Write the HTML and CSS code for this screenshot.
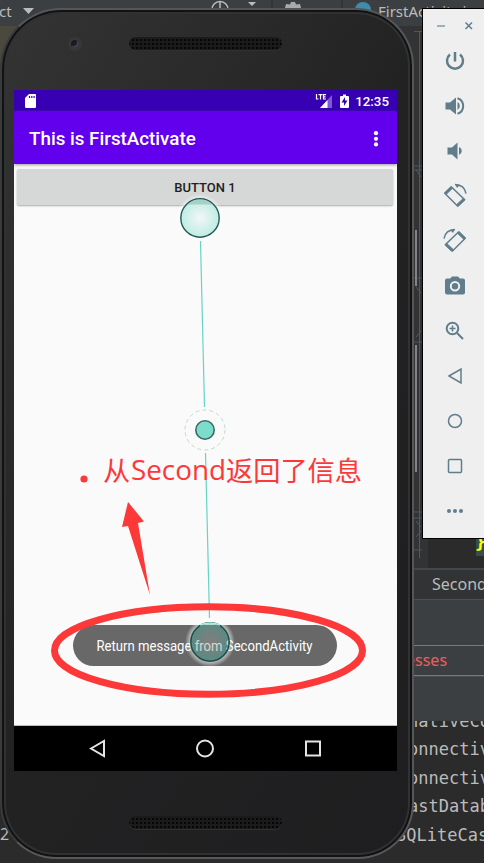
FILE: index.html
```
<!DOCTYPE html>
<html lang="en">
<head>
<meta charset="utf-8">
<title>Emulator</title>
<link rel="stylesheet" href="styles.css">
</head>
<body>
<main class="desktop">
  <section class="ide">
    <header class="ide-top">
      <span class="project">ct</span>
      <svg class="ide-icons" width="360" height="26" viewBox="0 0 360 26"><path d="M11 8h11l-5.500 6zM236 2h8l-4 4z" fill="#bbb"/><circle cx="208" cy="9.500" r="8" fill="none" stroke="#bbb" stroke-width="1.500"/><path d="M208 2v8" stroke="#bbb" stroke-width="1.500"/><path d="M273 8l1-4 4 .5 1-2.500h4l1 2.500 4-.5 1 4z" fill="#aaa"/><circle cx="351" cy="10" r="8" fill="#3f8dac"/><path d="M260 0v26M330 0v26" stroke="#292c2e"/></svg>
      <span class="filename">FirstActivity.java</span>
    </header>
    <div class="editor"><span class="brace">}</span></div>
    <div class="crumbs">Second</div>
    <div class="panel"></div>
    <div class="process">esses</div>
    <div class="panel-lower"></div>
    <div class="console">
      <p class="clipped">nativeCon</p><p>onnectivi</p><p>onnectivi</p><p>astDataba</p><p class="last">SQLiteCas</p>
    </div>
    <span class="left-number">2</span>
    <svg class="gutter" width="16" height="530" viewBox="0 0 16 530"><path d="M5.500 4v526M0 3.500h8M0 138h8M0 142h8M2 142l5 7M0 250h8M2 259l5 6M0 314h8M2 309l5-6M0 484h8M0 490h8M2 493l5 6M2 509l5-6M0 522h8" fill="none" stroke="#55585b"/><path d="M2 202v56M2 317v127" stroke="#818386" stroke-width="2"/></svg>
  </section>

  <section class="phone">
    <div class="phone-top"><i class="camera"></i><i class="speaker"></i></div>
    <div class="screen">
      <div class="statusbar">
        <svg width="12" height="14" viewBox="0 0 12 14"><path fill="#fff" d="M4 0h6.500q.5 0 .5 1.500v11q0 1.500-1 1.500h-9Q0 14 0 12.500V4z"/><path d="M4.500 2v2M6.800 2v2M9.100 2v2" stroke="#3700b3" stroke-width="1.200"/></svg>
        <span class="status-right">
          <svg width="34" height="15" viewBox="0 0 34 15"><path d="M5 14L17 1v13z" fill="#7e59cf"/><path d="M5 14l7.500-8v8z" fill="#fff"/><path d="M1.500 0v5h2M3.500.7h4M5.500.7V5.500M11 .7H8.500V5H11M8.500 2.800h2" fill="none" stroke="#fff" stroke-width="1.200"/><path d="M26 2h2V.5h3V2h2q1 0 1 1v10q0 1-1 1h-7q-1 0-1-1V3q0-1 1-1z" fill="#fff"/><path d="M30 3l-3.500 5.500H29V12l3.500-5.500H30z" fill="#3700b3"/></svg>
          <b>12:35</b>
        </span>
      </div>
      <div class="appbar"><h1>This is FirstActivate</h1><svg width="6" height="18" viewBox="0 0 6 18"><g fill="#fff"><circle cx="3" cy="3.200" r="2.100"/><circle cx="3" cy="8.800" r="2.100"/><circle cx="3" cy="14.400" r="2.100"/></g></svg></div>
      <div class="content"><button><span>BUTTON 1</span></button><div class="toast"><span>Return message from SecondActivity</span></div></div>
      <nav><svg width="383" height="45" viewBox="0 0 383 45"><g fill="none" stroke="#e4e4e4" stroke-width="2"><path d="M77 22.500L90 15v15z"/><circle cx="191" cy="22.500" r="8"/><path d="M292 15.500h14v14h-14z"/></g></svg></nav>
    </div>
    <div class="phone-bottom"><i class="speaker"></i></div>
  </section>

  <aside class="toolbar">
    <div class="window-controls"><svg width="61" height="20" viewBox="0 0 61 20"><path d="M14 11h8" stroke="#9db0b8" stroke-width="2"/><path d="M42.500 7.500l6.500 6.500M49 7.500L42.500 14" stroke="#607d8b" stroke-width="1.500"/></svg></div>
    <svg viewBox="0 0 24 24"><path class="line heavy" d="M12 3v9.500M7 5.400a8 8 0 1 0 10 0"/></svg>
    <svg viewBox="0 0 24 24"><path class="solid" d="M2.500 8.500v7h4.500l6 5V3.500l-6 5zM14.500 8v8q2.300-1.200 2.300-4t-2.300-4z"/><path class="line" d="M14.500 4.200a8.200 8.200 0 0 1 0 15.600"/></svg>
    <svg viewBox="0 0 24 24"><path class="solid" d="M4.500 8.500v7H9l5.500 5V3.500L9 8.500zM16 8v8q2.800-1.200 2.800-4T16 8z"/></svg>
    <svg class="rotate" viewBox="0 0 24 24"><path class="line thin" d="M8.500 3L21.500 15.500l-7 6.500L2 9.500zM12 .6q9.500.4 11 9"/><path class="line rim" d="M2 9.800L8.800 3.300M21.200 15.200L14.300 21.700"/><path class="solid" d="M12 0l5 1-3 3z"/></svg>
    <svg class="rotate flip" viewBox="0 0 24 24"><path class="line thin" d="M8.500 3L21.500 15.500l-7 6.500L2 9.500zM12 .6q9.500.4 11 9"/><path class="line rim" d="M2 9.800L8.800 3.300M21.200 15.200L14.300 21.700"/><path class="solid" d="M12 0l5 1-3 3z"/></svg>
    <svg viewBox="0 0 24 24"><path class="solid" d="M9 2.500L7.200 4.500H4q-2 0-2 2v12q0 2 2 2h16q2 0 2-2v-12q0-2-2-2h-3.200L15 2.500z"/><circle cx="12" cy="12.300" r="4.200" fill="#607d8b" stroke="#efefef" stroke-width="2"/></svg>
    <svg viewBox="0 0 24 24"><circle class="line" cx="9.500" cy="9.500" r="5.800"/><path class="line" d="M14 14l6 6"/><path class="line thin" d="M6.500 9.500h6M9.500 6.500v6"/></svg>
    <svg viewBox="0 0 24 24"><path class="line thin" d="M6 12l12-7v14z"/></svg>
    <svg viewBox="0 0 24 24"><circle class="line thin" cx="12" cy="12" r="6.500"/></svg>
    <svg viewBox="0 0 24 24"><rect class="line thin" x="5.500" y="5.500" width="13" height="13" rx="1"/></svg>
    <svg viewBox="0 0 24 24"><g class="solid"><circle cx="6" cy="12" r="2"/><circle cx="12" cy="12" r="2"/><circle cx="18" cy="12" r="2"/></g></svg>
  </aside>

  <svg class="overlay" width="484" height="863" viewBox="0 0 484 863">
    <defs>
      <radialGradient id="start"><stop stop-color="#f2f7f6"/><stop offset="1" stop-color="#beece4"/></radialGradient>
      <radialGradient id="halo"><stop offset=".76" stop-color="#fff" stop-opacity="0"/><stop offset=".78" stop-color="#fff" stop-opacity=".6"/><stop offset="1" stop-color="#fff" stop-opacity="0"/></radialGradient>
      <radialGradient id="finish"><stop stop-color="#a89a96"/><stop offset="1" stop-color="#4bb8a8"/></radialGradient>
    </defs>
    <path d="M200.500 241L204.500 407M205.500 453L209.500 618" stroke="#65d4c3" stroke-width="1.200"/>
    <circle cx="200" cy="218" r="24" fill="url(#halo)"/>
    <circle cx="200" cy="218" r="19.200" fill="url(#start)" stroke="#245b57" stroke-width="1.400"/>
    <path d="M187.500 204.500a18.300 18.300 0 0 1 25 0z" fill="#a5cfc7"/>
    <circle cx="205" cy="430" r="20" fill="none" stroke="#bddbd4" stroke-dasharray="4 3"/>
    <circle cx="205" cy="430" r="9.200" fill="#7edccd" stroke="#3b6b65" stroke-width="1.600"/>
    <ellipse cx="208.500" cy="650.500" rx="154" ry="43.700" fill="none" stroke="#fd3838" stroke-width="7"/>
    <circle cx="210" cy="642" r="25" fill="url(#halo)"/>
    <circle cx="210" cy="642" r="19.200" fill="url(#finish)" fill-opacity=".42" stroke="#164f4a" stroke-width="1.500"/>
    <path d="M200 625q10-4 20 0" fill="none" stroke="#b4f0df" stroke-width="1.500"/>
    <path d="M128 502l16 19.500-6 1.500 12 72-22-69-6 1z" fill="#fd3838"/>
    <circle cx="84" cy="479" r="3.600" fill="#fd3838"/>
    <g class="note"><text x="103" y="481">从</text><text x="131" y="480" textLength="95" lengthAdjust="spacingAndGlyphs">Second</text><text x="226" y="481">返回了信息</text></g>
  </svg>
</main>
</body>
</html>
```
FILE: styles.css
```
* { box-sizing: border-box; }
body { margin: 0; overflow: hidden; font-family: Roboto, "Noto Sans", sans-serif; }
.desktop { position: relative; width: 484px; height: 863px; overflow: hidden; background: #2b2b2b; }
.ide { height: 863px; display: grid; grid-template-rows: 26px 542px 31px 46px 31px 45px 142px; color: #bbb; font: 16px "Noto Sans", sans-serif; }
.ide-top { display: flex; background: #3c3f41; line-height: 22px; overflow: hidden; font-size: 15px; }
.project { width: 12px; flex: none; text-indent: -1px; font-size: 15px; }
.ide-icons { flex: none; }
.filename { margin-left: 6px; white-space: nowrap; }
.editor { display: flex; justify-content: flex-end; align-items: flex-end; background: linear-gradient(90deg, #4b483e 40px, #313335 40px, #313335 428px, #2b2b2b 428px); padding-bottom: 12px; }
.brace { width: 11px; height: 29px; background: #344f4a; color: #ff0; text-indent: -1px; font: bold 18px/30px "DejaVu Sans Mono", monospace; }
.crumbs { padding-left: 432px; border-top: 2px solid #444648; background: #313335; line-height: 29px; }
.panel, .panel-lower { background: #3c3f41; border-top: 1px solid #4c4f51; }
.process { background: #3c3f41; border-top: 1px solid #777a7b; border-bottom: 1px solid #777a7b; padding-left: 406px; line-height: 29px; color: #f25c5c; }
.console { background: #2b2b2b; padding-left: 408px; overflow: hidden; font: 17px/28.5px "DejaVu Sans Mono", monospace; }
.console p { margin: 0; white-space: nowrap; }
.console .clipped { height: 14px; line-height: 1px; }
.console .last { margin-left: -12px; }
.left-number { position: absolute; left: 0; top: 823px; }
.gutter { position: absolute; left: 414px; top: 28px; }
.phone { position: absolute; left: 0; top: 8px; width: 414px; height: 851px; display: grid; grid-template-rows: 80px 681px 86px; border: 2px solid #575657; border-left-color: #393a3b; border-bottom-color: #58595a; border-radius: 61px 58px 56px 56px; background: linear-gradient(120deg, #343435, #222223 50%, #1e1e20); box-shadow: inset 0 0 0 2px #111213, inset 0 0 0 4px #303132; padding: 0 15px 0 12px; }
.phone-top, .phone-bottom { display: grid; grid-template-columns: 54px 64px 154px; }
.camera { grid-column: 2; margin-top: 27px; width: 14px; height: 14px; border: 3px solid #373738; border-radius: 50%; background: #1b1922; box-shadow: inset -2px -2px 1px #493f48; }
.phone-top .speaker { grid-column: 3; margin: 27px 0 0 -3px; }
.phone-bottom .speaker { grid-column: 3; margin: 45px 0 0 -3px; }
.speaker { width: 153px; height: 13px; border-radius: 7px; background: radial-gradient(circle, #060606 0 1px, transparent 1.4px) 2px 1px / 4px 4px #1b1b1b; box-shadow: 0 1px 0 #303030; }
.screen { width: 383px; display: grid; grid-template-rows: 22px 52px 562px 45px; background: #fafafa; overflow: hidden; }
.statusbar { display: flex; align-items: center; justify-content: space-between; padding: 0 8px 0 11px; color: #fff; background: #3700b3; }
.status-right { display: flex; gap: 6px; align-items: center; font-size: 13.3px; }
.status-right b { font-weight: 500; }
.appbar { display: flex; align-items: center; justify-content: space-between; padding: 1px 18px 0 15px; background: #6200ee; color: #fff; box-shadow: 0 1px 3px #999; z-index: 1; }
h1 { margin: 0; font-size: 18.8px; font-weight: 500; }
.content { display: grid; grid-template-rows: 36px 41px; row-gap: 420px; padding-top: 5px; border-bottom: 1px solid #b9bdbb; }
button { margin: 0 4px 0 3px; padding: 0; border: 0; border-radius: 2px; background: #d6d7d7; color: #212121; font: 500 13px Roboto, sans-serif; box-shadow: 0 1px 2px #aaa; }
.toast { margin-left: 59px; width: 264px; height: 41px; border-radius: 21px; background: #686868; color: #fff; display: grid; place-items: center; }
.toast span { font-size: 15px; white-space: nowrap; transform: scaleX(.875); }
nav { background: #000; }
nav svg { display: block; }
.toolbar { position: absolute; left: 422px; top: 8px; width: 66px; height: 531px; border: 1px solid #000; background: #efefef; display: grid; grid-template-rows: 29px repeat(11, 45px); justify-items: center; align-items: center; }
.window-controls { justify-self: start; width: 61px; height: 17px; }
.toolbar > svg { width: 24px; height: 24px; overflow: visible; }
.line { fill: none; stroke: #607d8b; stroke-width: 2; }
.line.thin { stroke-width: 1.5; }
.line.rim { stroke-width: 3; }
.line.heavy { stroke-width: 2.5; }
.solid { fill: #607d8b; }
.toolbar .flip { transform: scaleX(-1); }
.overlay { position: absolute; inset: 0; }
.note { font: 27.2px "Open Sans", "Noto Sans CJK SC", sans-serif; fill: #fd3838; }
```
